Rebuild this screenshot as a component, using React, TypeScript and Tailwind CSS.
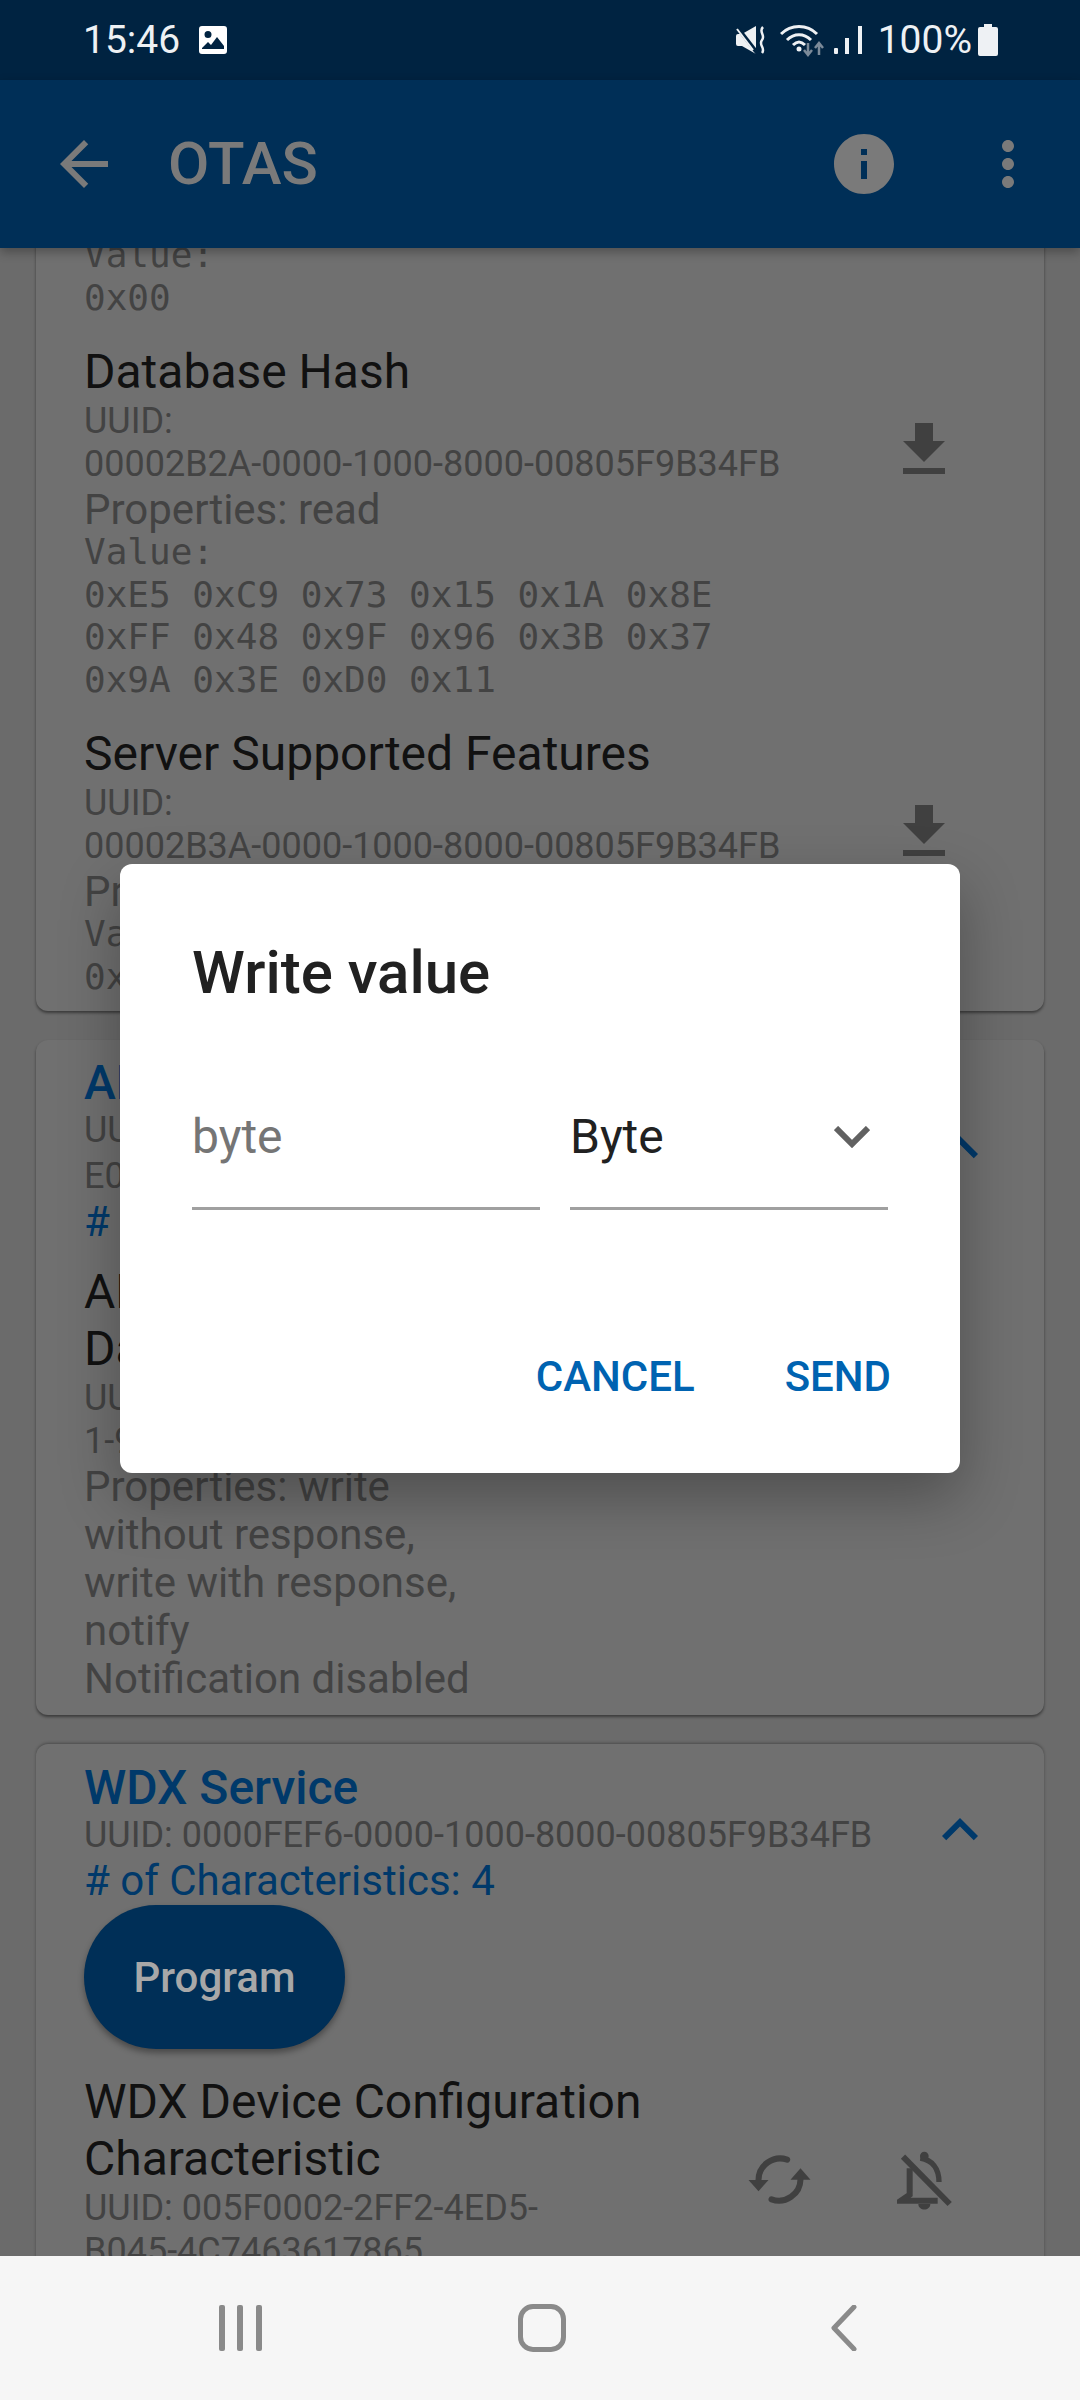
import React from "react";

const font = { fontFamily: "Roboto, sans-serif" };

const Download = () => (
    <svg viewBox="0 0 24 24" className="w-[72px] h-[72px] fill-[#404040]">
        <path d="M19 9h-4V3H9v6H5l7 7 7-7zM5 18v2h14v-2H5z" />
    </svg>
);

const ChevronUp = () => (
    <svg viewBox="0 0 24 24" className="w-[72px] h-[72px] fill-[#00396a]">
        <path d="M12 8l-6 6 1.41 1.41L12 10.83l4.59 4.58L18 14z" />
    </svg>
);

const SyncIcon = () => (
    <svg viewBox="140 210 200 180" className="w-[67px] h-[60px]">
        <path d="M263 239A65 65 0 0 0 177 300" fill="none" stroke="#404040" strokeWidth="18" strokeLinecap="round" />
        <path d="M216 358A65 65 0 0 0 303 298" fill="none" stroke="#404040" strokeWidth="18" strokeLinecap="round" />
        <path d="M147 300H207L177 334Z" fill="#404040" />
        <path d="M273 299H333L303 265Z" fill="#404040" />
    </svg>
);

const BellOffIcon = () => (
    <svg viewBox="590 210 180 180" className="w-[60px] h-[60px]">
        <path d="M608 230L748 372" stroke="#404040" strokeWidth="18" fill="none" />
        <path d="M628 265V344L602 362H712" stroke="#404040" strokeWidth="18" fill="none" />
        <path d="M660 234C695 240 716 265 716 306" stroke="#404040" strokeWidth="16" fill="none" />
        <circle cx="672" cy="228" r="13" fill="#404040" />
        <path d="M654 372H690C690 394 654 394 654 372Z" fill="#404040" />
    </svg>
);

function Meta({ lines, mono }: { lines: string[]; mono: string[] }) {
    return (
        <div>
            {lines.map((l, i) => (
                <div key={i} className={l.startsWith("UUID") || /^[0-9A-F]/.test(l) ? "text-[36px] leading-[43px] text-[#434343]" : "text-[42px] leading-[48px] text-[#434343]"}>{l}</div>
            ))}
            <div className={lines.length ? "-mt-[3px]" : ""}>
                {mono.map((l, i) => (
                    <div key={i} className="text-[36px] leading-[42.5px] text-[#434343] whitespace-pre" style={{ fontFamily: "'DejaVu Sans Mono', monospace" }}>{l}</div>
                ))}
            </div>
        </div>
    );
}

function Characteristic({ name, lines, mono = [], w = "w-[800px]", icons, className = "" }: { name: string[]; lines: string[]; mono?: string[]; w?: string; icons?: React.ReactNode; className?: string }) {
    return (
        <div className={"flex items-center justify-between " + className}>
            <div className={w}>
                {name.map((n) => (
                    <div key={n} className="text-[48px] leading-[57px] text-[#111111]">{n}</div>
                ))}
                <Meta lines={lines} mono={mono} />
            </div>
            {icons}
        </div>
    );
}

function ServiceHead({ title, uuid }: { title: string; uuid: string[] }) {
    return (
        <div className="flex items-center justify-between">
            <div>
                <div className="text-[48px] leading-[48px] font-medium text-[#00396a]">{title}</div>
                {uuid.map((u) => (
                    <div key={u} className="text-[36px] leading-[45px] text-[#434343] mt-[1px]">{u}</div>
                ))}
                <div className="text-[42px] leading-[46px] text-[#00396a]"># of Characteristics: 4</div>
            </div>
            <div className="mr-[36px] -mt-[9px]"><ChevronUp /></div>
        </div>
    );
}

export default function App() {
    return (
        <div className="flex flex-col w-[1080px] h-[2400px] bg-[#6b6b6b] overflow-hidden relative" style={font}>
            {/* status bar */}
            <div className="flex items-center justify-between h-[80px] pl-[83px] pr-[82px] bg-[#002341] text-[#eef1f4] shrink-0">
                <div className="flex items-center gap-[19px]">
                    <span className="text-[39px] leading-[40px]">15:46</span>
                    <svg viewBox="0 0 28 28" className="w-[28px] h-[28px]">
                        <path fillRule="evenodd" d="M3 0H25A3 3 0 0 1 28 3V25A3 3 0 0 1 25 28H3A3 3 0 0 1 0 25V3A3 3 0 0 1 3 0ZM3 23H25V20L18 11L12 19L9 16L3 22ZM9 5A3.5 3.5 0 1 0 9 12A3.5 3.5 0 1 0 9 5Z" fill="#ffffff" />
                    </svg>
                </div>
                <div className="flex items-center">
                    <svg viewBox="0 0 30 30" className="w-[30px] h-[30px] mr-[14px]">
                        <path d="M0 11Q0 9 2 9H6L20 1V29L6 21H2Q0 21 0 19Z" fill="#eef1f4" />
                        <path d="M1 2L22 29" stroke="#002341" strokeWidth="4" />
                        <path d="M1 4L17 25" stroke="#eef1f4" strokeWidth="2" />
                        <path d="M27 2C22 7 30 10 26 15C22 20 30 23 26 28" stroke="#eef1f4" strokeWidth="2.5" fill="none" />
                    </svg>
                    <svg viewBox="0 0 44 34" className="w-[44px] h-[34px] mr-[10px]">
                        <path d="M1 11C11 1 27 1 37 11" stroke="#eef1f4" strokeWidth="3" fill="none" />
                        <path d="M7 17C14 10 24 10 31 17" stroke="#eef1f4" strokeWidth="3" fill="none" />
                        <path d="M13 22C17 18 21 18 25 22" stroke="#eef1f4" strokeWidth="3" fill="none" />
                        <circle cx="19" cy="26" r="2.5" fill="#eef1f4" />
                        <path d="M28 20V32M24 27L28 32L32 27" stroke="#7b8a99" strokeWidth="2.5" fill="none" />
                        <path d="M39 32V20M35 25L39 20L43 25" stroke="#7b8a99" strokeWidth="2.5" fill="none" />
                    </svg>
                    <svg viewBox="0 0 28 28" className="w-[28px] h-[28px] mr-[16px]">
                        <rect x="0" y="22" width="4" height="6" rx="1" fill="#eef1f4" />
                        <rect x="11" y="12" width="4" height="16" fill="#eef1f4" />
                        <rect x="24" y="0" width="4" height="28" fill="#eef1f4" />
                    </svg>
                    <span className="text-[39px] leading-[40px] mr-[6px]">100%</span>
                    <svg viewBox="0 0 20 32" className="w-[20px] h-[32px]">
                        <path d="M6 0H14V3H18A2 2 0 0 1 20 5V30A2 2 0 0 1 18 32H2A2 2 0 0 1 0 30V5A2 2 0 0 1 2 3H6Z" fill="#eef1f4" />
                    </svg>
                </div>
            </div>

            {/* app bar */}
            <div className="relative z-10 flex items-center h-[168px] bg-[#002f57] shrink-0 shadow-[0_4px_10px_rgba(0,0,0,0.3)]">
                <svg viewBox="0 0 24 24" className="w-[72px] h-[72px] ml-[48px] fill-[#7a7a7a]">
                    <path d="M20 11H7.83l5.59-5.59L12 4l-8 8 8 8 1.41-1.41L7.83 13H20v-2z" />
                </svg>
                <span className="ml-[48px] text-[60px] font-medium text-[#7a7a7a]">OTAS</span>
                <svg viewBox="0 0 24 24" className="w-[72px] h-[72px] ml-auto fill-[#7a7a7a]">
                    <path d="M12 2C6.48 2 2 6.48 2 12s4.48 10 10 10 10-4.48 10-10S17.52 2 12 2zm1 15h-2v-6h2v6zm0-8h-2V7h2v2z" />
                </svg>
                <svg viewBox="0 0 24 24" className="w-[72px] h-[72px] ml-[72px] mr-[36px] fill-[#7a7a7a]">
                    <path d="M12 8c1.1 0 2-.9 2-2s-.9-2-2-2-2 .9-2 2 .9 2 2 2zm0 2c-1.1 0-2 .9-2 2s.9 2 2 2 2-.9 2-2-.9-2-2-2zm0 6c-1.1 0-2 .9-2 2s.9 2 2 2 2-.9 2-2-.9-2-2-2z" />
                </svg>
            </div>

            {/* scrolled list */}
            <div className="flex-1 overflow-hidden">
                <div className="flex flex-col gap-[29px] mx-[36px] -mt-[14px]">
                    <div className="bg-[#707070] rounded-b-[12px] pl-[48px] pr-[48px] pb-[13px] shadow-[0_2px_3px_rgba(0,0,0,0.45)]">
                        <Meta lines={[]} mono={["Value:", "0x00"]} />
                        <Characteristic
                            className="mt-[24px]"
                            name={["Database Hash"]}
                            lines={["UUID:", "00002B2A-0000-1000-8000-00805F9B34FB", "Properties: read"]}
                            mono={["Value:", "0xE5 0xC9 0x73 0x15 0x1A 0x8E", "0xFF 0x48 0x9F 0x96 0x3B 0x37", "0x9A 0x3E 0xD0 0x11"]}
                            icons={<div className="self-start mt-[71px] mr-[36px]"><Download /></div>}
                        />
                        <Characteristic
                            className="mt-[24px]"
                            name={["Server Supported Features"]}
                            lines={["UUID:", "00002B3A-0000-1000-8000-00805F9B34FB", "Properties: read"]}
                            mono={["Value:", "0x01"]}
                            icons={<div className="self-start mt-[71px] mr-[36px]"><Download /></div>}
                        />
                    </div>

                    <div className="bg-[#707070] rounded-[12px] pl-[48px] pr-[12px] pt-[19px] pb-[15px] shadow-[0_2px_3px_rgba(0,0,0,0.45)]">
                        <ServiceHead title="ADI OTA Service" uuid={["UUID:", "E0262760-08C2-11E1-9073-0E8AC72E1001"]} />
                        <Characteristic
                            className="mt-[18px]"
                            w="w-[400px]"
                            name={["ADI OTA", "Data"]}
                            lines={["UUID: E0262760-08C2-1", "1-9073-0E8AC72E0001", "Properties: write", "without response,", "write with response,", "notify", "Notification disabled"]}
                        />
                    </div>

                    <div className="bg-[#707070] rounded-t-[12px] pl-[48px] pr-[12px] pt-[20px] shadow-[0_-1px_3px_rgba(0,0,0,0.3)]">
                        <ServiceHead title="WDX Service" uuid={["UUID: 0000FEF6-0000-1000-8000-00805F9B34FB"]} />
                        <div className="flex items-center justify-center w-[261px] h-[144px] mt-[1px] rounded-full bg-[#002f57] text-[42px] font-medium text-[#a8a8a8] shadow-[0_4px_6px_rgba(0,0,0,0.35)]">Program</div>
                        <Characteristic
                            className="mt-[24px]"
                            w="w-[640px]"
                            name={["WDX Device Configuration", "Characteristic"]}
                            lines={["UUID: 005F0002-2FF2-4ED5-", "B045-4C7463617865"]}
                            icons={
                                <div className="flex items-center gap-[84px] mr-[75px] mt-[16px]">
                                    <SyncIcon />
                                    <BellOffIcon />
                                </div>
                            }
                        />
                    </div>
                </div>
            </div>

            {/* nav bar */}
            <div className="relative z-20 grid grid-cols-3 items-center justify-items-center h-[144px] pl-[90px] pr-[86px] bg-[#f6f6f6] shrink-0">
                <svg viewBox="0 0 43 46" className="w-[43px] h-[46px]">
                    <rect x="0" y="0" width="6" height="46" rx="2" fill="#8a8a8a" />
                    <rect x="18" y="0" width="6" height="46" rx="2" fill="#8a8a8a" />
                    <rect x="37" y="0" width="6" height="46" rx="2" fill="#8a8a8a" />
                </svg>
                <div className="w-[48px] h-[48px] rounded-[15px] border-[5px] border-[#8a8a8a]" />
                <svg viewBox="0 0 26 46" className="w-[26px] h-[46px] ml-[2px]">
                    <path d="M23 2L3 23L23 44" stroke="#8a8a8a" strokeWidth="5" fill="none" strokeLinecap="round" strokeLinejoin="round" />
                </svg>
            </div>

            {/* dialog layer */}
            <div className="absolute z-10 left-0 right-0 top-[80px] h-[2176px] flex items-center justify-center">
                <div className="flex flex-col w-[840px] h-[609px] bg-white rounded-[12px] pl-[72px] pr-[72px] shadow-[0_24px_60px_rgba(0,0,0,0.3)]">
                    <div className="mt-[74px] text-[60px] leading-[70px] font-medium text-[#212121]">Write value</div>
                    <div className="flex mt-[91px] gap-[30px]">
                        <div className="w-[348px] h-[111px] border-b-[3px] border-[#a0a0a0] text-[48px] leading-[76px] text-[#757575]">byte</div>
                        <div className="flex justify-between w-[318px] h-[111px] border-b-[3px] border-[#a0a0a0] text-[48px] leading-[76px] text-[#212121]">
                            <span>Byte</span>
                            <svg viewBox="0 0 36 22" className="w-[36px] h-[22px] mt-[27px] mr-[18px]">
                                <path d="M2 2L18 18L34 2" stroke="#616161" strokeWidth="6" fill="none" />
                            </svg>
                        </div>
                    </div>
                    <div className="flex justify-end gap-[90px] mt-[142px] -mr-[3px] text-[42px] leading-[50px] font-medium text-[#0063b1]">
                        <span>CANCEL</span>
                        <span>SEND</span>
                    </div>
                </div>
            </div>
        </div>
    );
}
